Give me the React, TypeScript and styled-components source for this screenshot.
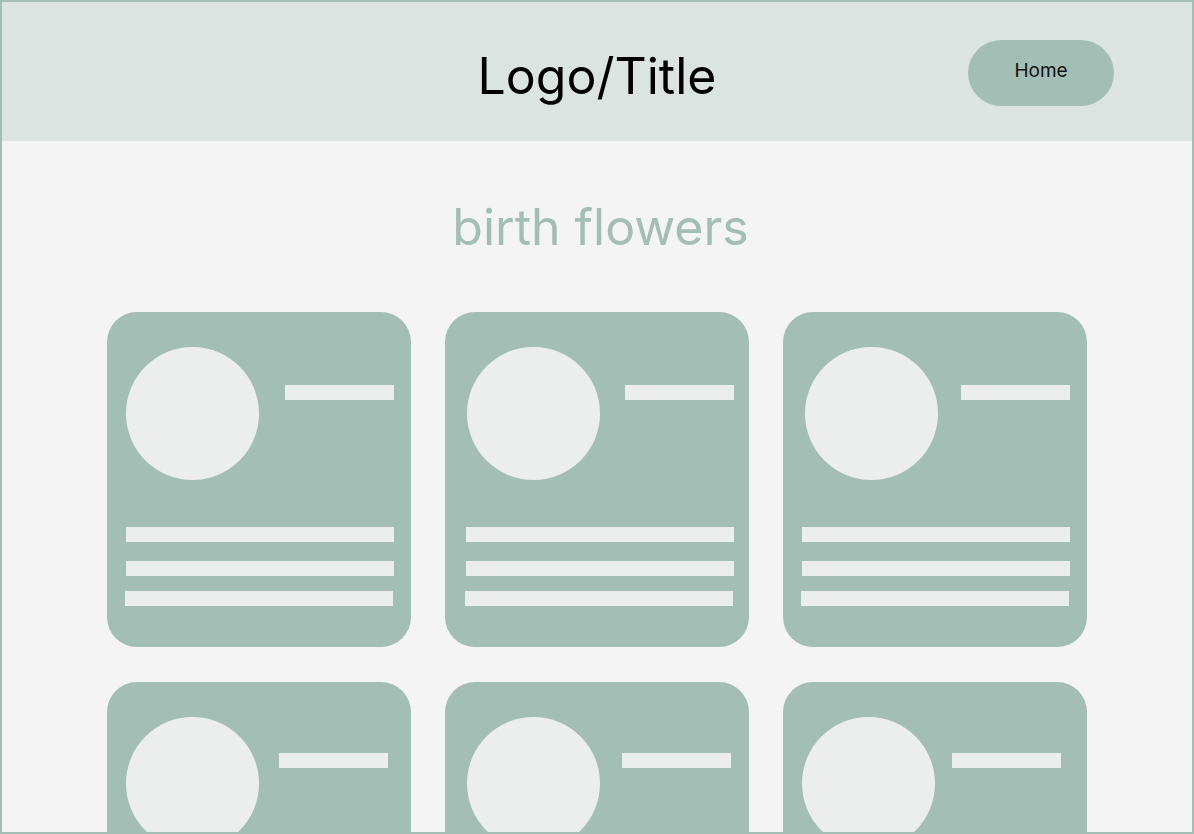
import React from "react";
import styled, { createGlobalStyle } from "styled-components";

const cards = [
  { circle: 19, bar: 17, line: 19, barTop: 38 },
  { circle: 22, bar: 15, line: 21, barTop: 38 },
  { circle: 22, bar: 17, line: 19, barTop: 38 },
  { circle: 19, bar: 23, line: 19, barTop: 36 },
  { circle: 22, bar: 18, line: 21, barTop: 36 },
  { circle: 19, bar: 26, line: 19, barTop: 36 },
];

function App() {
  return (
    <>
      <GlobalStyle />
      <S.Frame>
        <S.Header>
          <span />
          <S.Title>Logo/Title</S.Title>
          <S.HomeButton>Home</S.HomeButton>
        </S.Header>
        <S.Main>
          <S.Heading>birth flowers</S.Heading>
          <S.Grid>
            {cards.map((c, i) => (
              <S.Card key={i}>
                <S.CardTop $left={c.circle} $right={c.bar}>
                  <S.Circle />
                  <S.Bar $top={c.barTop} $width={109} />
                </S.CardTop>
                <S.Lines $left={c.line}>
                  <S.Bar $width={268} />
                  <S.Bar $width={268} $top={19} />
                  <S.Bar $width={268} $top={15} $shift={-1} />
                </S.Lines>
              </S.Card>
            ))}
          </S.Grid>
        </S.Main>
      </S.Frame>
    </>
  );
}

const GlobalStyle = createGlobalStyle`
  body {
    margin: 0;
    font-family: Inter, "Liberation Sans", sans-serif;
  }
`;

const S = {
  Frame: styled.div`
    box-sizing: border-box;
    width: 1194px;
    height: 834px;
    border: 2px solid #a3bfb5;
    background: #f4f4f4;
    overflow: hidden;
  `,
  Header: styled.header`
    display: grid;
    grid-template-columns: 1fr auto 1fr;
    align-items: center;
    height: 139px;
    background: #dbe4e1;
  `,
  Title: styled.h1`
    margin: 0;
    padding-top: 8px;
    font-size: 50px;
    font-weight: 400;
    line-height: 60px;
    color: #000;
  `,
  HomeButton: styled.button`
    justify-self: end;
    margin: 3px 78px 0 0;
    width: 146px;
    height: 66px;
    border: none;
    border-radius: 33px;
    background: #a3bfb5;
    font-family: Inter, "Liberation Sans", sans-serif;
    font-size: 19px;
    color: #111;
    padding-bottom: 6px;
  `,
  Main: styled.main`
    display: flex;
    flex-direction: column;
    align-items: center;
    padding-top: 57px;
  `,
  Heading: styled.h2`
    margin: 0 0 56px;
    padding-left: 7px;
    font-size: 50px;
    font-weight: 400;
    line-height: 58px;
    color: #a3bfb5;
  `,
  Grid: styled.div`
    display: grid;
    grid-template-columns: repeat(3, 304px);
    column-gap: 34px;
    row-gap: 35px;
  `,
  Card: styled.div`
    box-sizing: border-box;
    height: 335px;
    padding-top: 35px;
    border-radius: 30px;
    background: #a3bfb5;
  `,
  CardTop: styled.div<{ $left: number; $right: number }>`
    display: flex;
    justify-content: space-between;
    align-items: flex-start;
    padding: 0 ${(p) => p.$right}px 0 ${(p) => p.$left}px;
  `,
  Circle: styled.div`
    width: 133px;
    height: 133px;
    border-radius: 50%;
    background: #eceeed;
  `,
  Lines: styled.div<{ $left: number }>`
    display: flex;
    flex-direction: column;
    padding: 47px 0 0 ${(p) => p.$left}px;
  `,
  Bar: styled.div<{ $width: number; $top?: number; $shift?: number }>`
    width: ${(p) => p.$width}px;
    height: 15px;
    margin-top: ${(p) => p.$top ?? 0}px;
    margin-left: ${(p) => p.$shift ?? 0}px;
    background: #eceeed;
  `,
};

export default App;
